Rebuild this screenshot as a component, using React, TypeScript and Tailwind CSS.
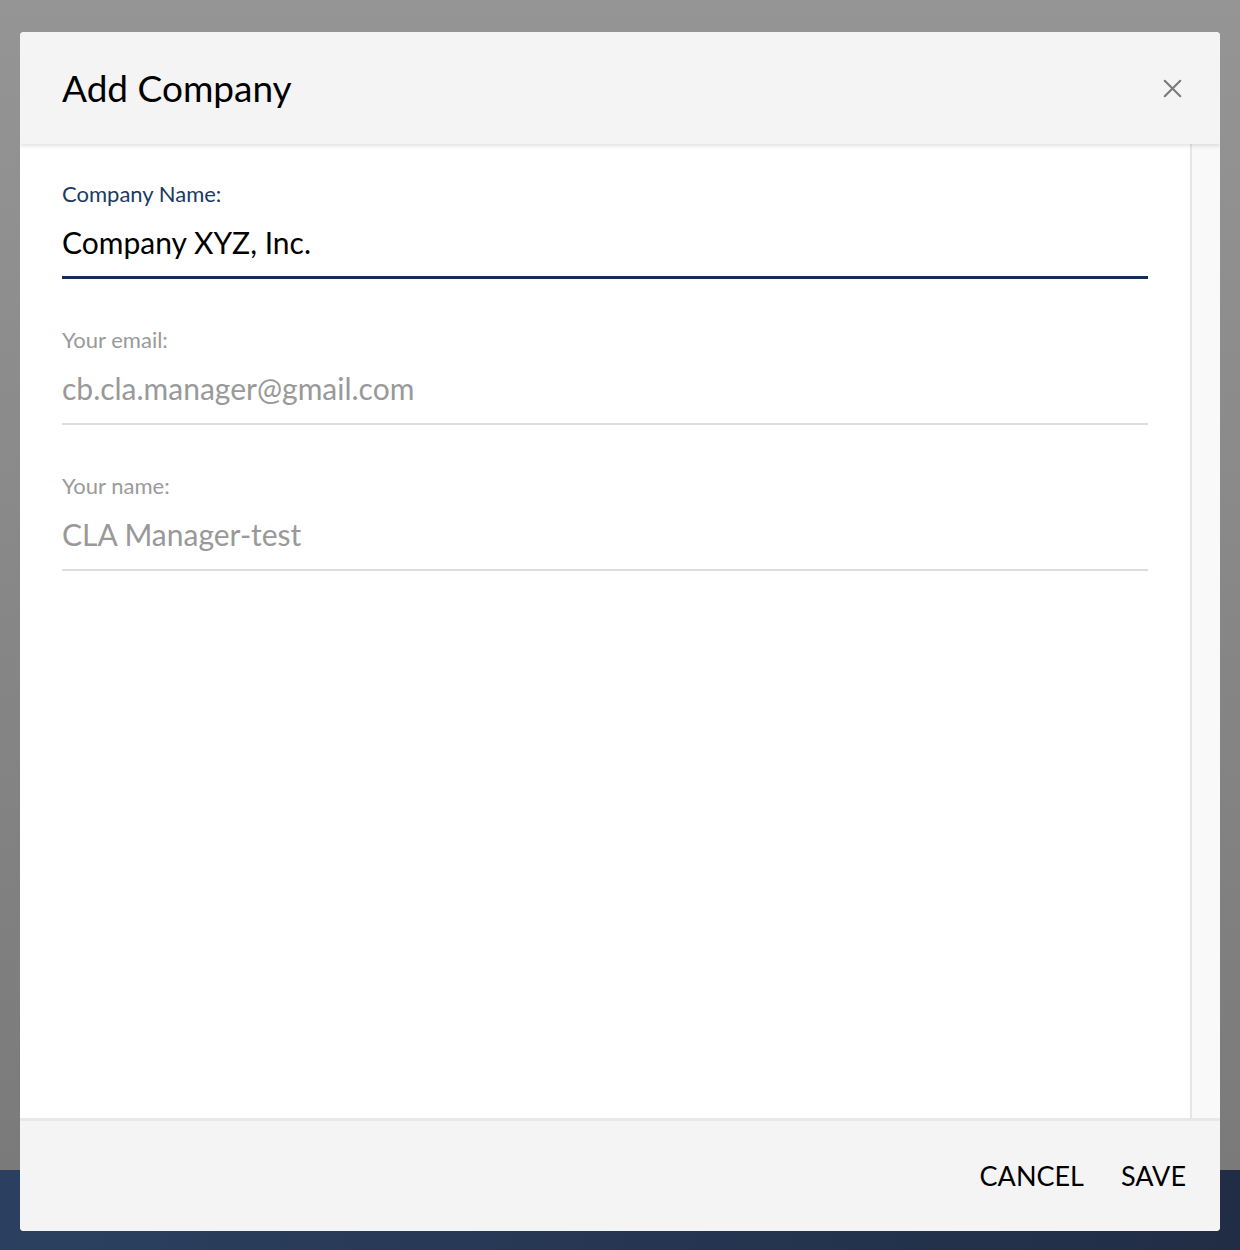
import { X } from 'lucide-react';

type FieldProps = {
  label: string;
  value: string;
  active?: boolean;
};

function Field({ label, value, active }: FieldProps) {
  return (
    <div className="flex flex-col">
      <label
        className={
          active
            ? 'text-[22px] leading-[24px] text-[#1b3a63]'
            : 'text-[22px] leading-[24px] text-[#9a9a9a]'
        }
      >
        {label}
      </label>
      <div
        className={
          active
            ? 'mt-[18px] pb-[16px] text-[30px] leading-[36px] text-black border-b-[3px] border-[#0f2f5a]'
            : 'mt-[18px] pb-[17px] text-[30px] leading-[36px] text-[#999999] border-b-2 border-[#dddddd]'
        }
      >
        {value}
      </div>
    </div>
  );
}

export default function App() {
  return (
    <div
      className="relative w-full h-[1250px] flex flex-col"
      style={{ fontFamily: '"Lato", "Open Sans", sans-serif' }}
    >
      <div className="flex-1 bg-gradient-to-b from-[#959595] to-[#7a7a7a]" />
      <div className="h-[80px] bg-gradient-to-r from-[#2b4060] to-[#212d45]" />

      <div className="absolute left-[20px] top-[32px] w-[1200px] h-[1199px] rounded-[4px] overflow-hidden flex flex-col bg-white">
        <div className="relative z-10 h-[112px] shrink-0 bg-[#f4f4f4] flex items-center justify-between pl-[42px] pr-[32px] shadow-[0_2px_4px_rgba(0,0,0,0.12)]">
          <h1 className="text-[37px] leading-[44px] text-black">Add Company</h1>
          <X className="w-[31px] h-[31px] text-[#7a7a7a]" strokeWidth={1.6} />
        </div>

        <div className="flex-1 flex min-h-0">
          <div className="flex-1 bg-white px-[42px] pt-[38px] flex flex-col gap-[49px]">
            <Field label="Company Name:" value="Company XYZ, Inc." active />
            <Field label="Your email:" value="cb.cla.manager@gmail.com" />
            <Field label="Your name:" value="CLA Manager-test" />
          </div>
          <div className="w-[30px] shrink-0 bg-[#f9f9f9] border-l-2 border-[#e6e6e6]" />
        </div>

        <div className="h-[113px] shrink-0 bg-[#f4f4f4] border-t-[3px] border-[#e8e8e8] flex items-center justify-end gap-[37px] pr-[34px]">
          <button className="text-[27px] leading-[32px] text-black">CANCEL</button>
          <button className="text-[27px] leading-[32px] text-black">SAVE</button>
        </div>
      </div>
    </div>
  );
}
